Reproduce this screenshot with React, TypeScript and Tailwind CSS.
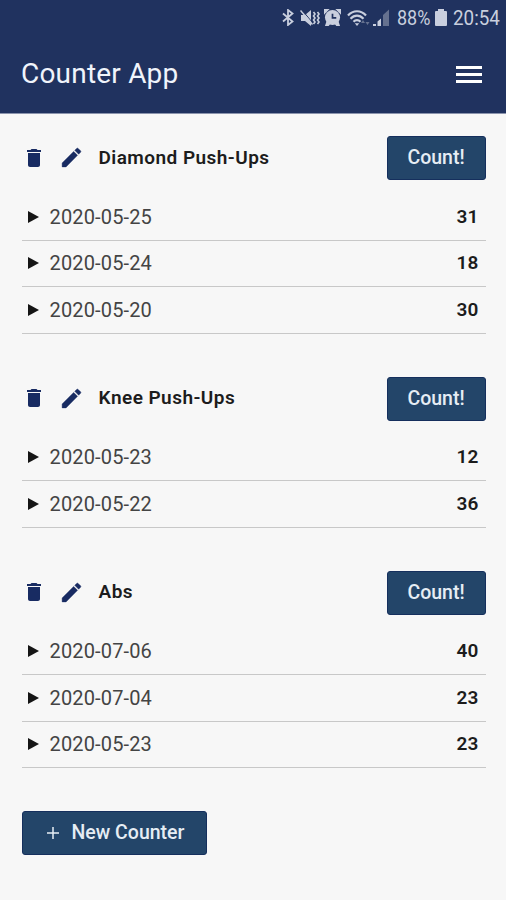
import { MdDelete } from "react-icons/md";

interface Entry {
  date: string;
  count: number;
}

interface Counter {
  name: string;
  entries: Entry[];
}

const COUNTERS: Counter[] = [
  {
    name: "Diamond Push-Ups",
    entries: [
      { date: "2020-05-25", count: 31 },
      { date: "2020-05-24", count: 18 },
      { date: "2020-05-20", count: 30 },
    ],
  },
  {
    name: "Knee Push-Ups",
    entries: [
      { date: "2020-05-23", count: 12 },
      { date: "2020-05-22", count: 36 },
    ],
  },
  {
    name: "Abs",
    entries: [
      { date: "2020-07-06", count: 40 },
      { date: "2020-07-04", count: 23 },
      { date: "2020-05-23", count: 23 },
    ],
  },
];

function StatusBar() {
  return (
    <div className="flex h-9 items-center justify-end pr-[6px] text-[#c9cfde]">
      <svg className="mt-[-2px] mr-[6px] h-[17px] w-[12px]" viewBox="0 0 12 17" fill="none" stroke="currentColor" strokeWidth="1.8">
        <path d="M1 4.500l9.500 8L6 16V1l4.500 3.500-9.500 8" />
      </svg>
      {/* muted, vibrating */}
      <svg className="mt-[-1px] mr-[4px] h-[18px] w-[20px]" viewBox="0 0 20 18" fill="currentColor">
        <path d="M1 6h4l6-5v16l-6-5H1z" />
        <path d="M13.5 3l1.5 2-1.5 2 1.5 2-1.5 2 1.5 2-1.5 2M17.5 3L19 5l-1.5 2L19 9l-1.5 2 1.5 2-1.5 2" fill="none" stroke="currentColor" strokeWidth="1.6" />
        <path d="M2 1l10 12" stroke="#20325f" strokeWidth="1" />
        <path d="M.5 1.5l12 14" stroke="currentColor" strokeWidth="1.5" />
      </svg>
      <svg className="mt-[-1px] mr-[6px] h-[17px] w-[17px]" viewBox="0 0 18 18" fill="currentColor">
        <path d="M0 0h6L0 6zM18 0h-6l6 6zM3 12l-2 6h4l2-3zM15 12l2 6h-4l-2-3z" />
        <circle cx="9" cy="9" r="8" />
        <path d="M9 5v4.5h4" fill="none" stroke="#20325f" strokeWidth="1.8" />
      </svg>
      <svg className="mt-[-1px] mr-[2px] h-[18px] w-[24px]" viewBox="0 0 24 18" fill="none" stroke="currentColor" strokeWidth="2.2">
        <path d="M1 6.5C6 .8 14 .8 19 6.5M3.5 9.7c4-4.2 9-4.2 13 0M6.5 12.7c2-2.2 5-2.2 7 0" />
        <path d="M10 17l-2.2-2.8h4.4z" fill="currentColor" stroke="none" />
        <path d="M16 11l2 3h-4zM20.5 16l-2-3h4z" fill="#65718f" stroke="none" />
      </svg>
      <svg className="mt-[-1px] mr-[7px] h-[18px] w-[17px]" viewBox="0 0 17 18" fill="currentColor">
        <path d="M0 15h3v2H0zM4.5 12.5l3.5-3v7.5H4.5z" />
        <path d="M10 6l6-5.5v16.5h-6z" fill="#65718f" />
      </svg>
      <span className="mt-[-1px] w-[34px] whitespace-nowrap text-[20px] leading-9">
        <span className="inline-block origin-left scale-x-[.9]">88%</span>
      </span>
      <svg className="mt-[-1px] mr-[6px] ml-[4px] h-[17px] w-[12px]" viewBox="0 0 12 17" fill="currentColor">
        <path d="M3 0h6v2h2a1 1 0 0 1 1 1v13a1 1 0 0 1-1 1H1a1 1 0 0 1-1-1V3a1 1 0 0 1 1-1h2z" />
      </svg>
      <span className="mt-[-1px] w-[47px] whitespace-nowrap text-[20px] leading-9">
        <span className="inline-block origin-left scale-x-[.94]">20:54</span>
      </span>
    </div>
  );
}

function EntryRow({ entry }: { entry: Entry }) {
  return (
    <li className="flex h-[46.5px] items-center border-b-[1.5px] border-[#c8c8c8] pr-[7px] pl-[6.5px]">
      <svg className="mr-[10.5px] h-3 w-[11px]" viewBox="0 0 11 12" fill="#151515">
        <path d="M0 0l11 6-11 6z" />
      </svg>
      <span className="text-[20px] tracking-[.15px] text-[#444]">{entry.date}</span>
      <span className="ml-auto text-[19px] font-semibold tracking-[.2px] text-[#1c1c1c]">{entry.count}</span>
    </li>
  );
}

function CounterSection({ counter }: { counter: Counter }) {
  return (
    <section className="mb-[43px]">
      <div className="mb-[14px] flex h-11 items-center">
        <button className="mt-[-1px] text-[#182b62]">
          <MdDelete className="h-6 w-6" />
        </button>
        <button className="mt-[-1px] ml-[13px] text-[#182b62]">
          <svg className="h-[25px] w-[25px]" viewBox="0 0 24 24" fill="currentColor" stroke="currentColor" strokeWidth=".4">
            <path d="M3 17.25V21h3.75L17.81 9.94l-3.75-3.75zM20.71 7.04a1 1 0 0 0 0-1.41l-2.34-2.34a1 1 0 0 0-1.41 0l-1.83 1.83 3.75 3.75z" />
          </svg>
        </button>
        <h2 className="ml-[15px] text-[19px] font-semibold tracking-[.45px] text-[#1c1c1c]">{counter.name}</h2>
        <button className="ml-auto h-11 w-[99px] rounded-[3px] border border-[#152f5d] bg-[#234569] text-[19.5px] font-medium text-[#e6edf4]">
          Count!
        </button>
      </div>
      <ul>
        {counter.entries.map((entry) => (
          <EntryRow key={entry.date} entry={entry} />
        ))}
      </ul>
    </section>
  );
}

export default function App() {
  return (
    <div className="h-[900px] overflow-hidden bg-[#f7f7f7] font-['Roboto',sans-serif]">
      <header className="h-[114px] border-b border-[#8b94ad] bg-[#20325f]">
        <StatusBar />
        <div className="flex h-[76px] items-center justify-between pr-[24px] pl-[21px]">
          <h1 className="text-[28px] tracking-[.2px] text-[#f0f4fb]">Counter App</h1>
          <button className="flex flex-col gap-1 text-white">
            <span className="h-[3px] w-[26px] bg-white" />
            <span className="h-[3px] w-[26px] bg-white" />
            <span className="h-[3px] w-[26px] bg-white" />
          </button>
        </div>
      </header>
      <main className="pt-[22px] pr-[20.5px] pl-[21.5px]">
        {COUNTERS.map((counter) => (
          <CounterSection key={counter.name} counter={counter} />
        ))}
        <button className="flex h-11 w-[185px] items-center rounded-[3px] border border-[#152f5d] bg-[#234569] pl-[24px] text-[19.5px] font-medium text-[#e6edf4]">
          <svg className="mr-[13px] h-3 w-3" viewBox="0 0 12 12" stroke="currentColor" strokeWidth="1.5">
            <path d="M6 0v12M0 6h12" />
          </svg>
          New Counter
        </button>
      </main>
    </div>
  );
}
